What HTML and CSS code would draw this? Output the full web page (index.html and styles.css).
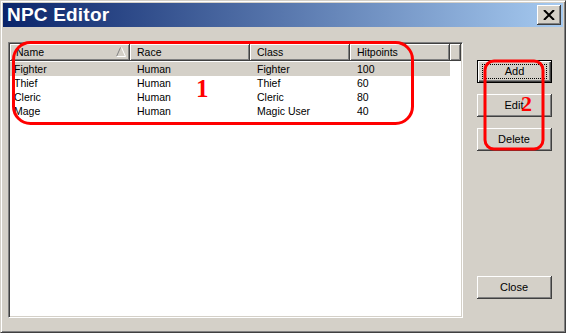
FILE: index.html
```html
<!DOCTYPE html>
<html lang="en">
<head>
    <meta charset="UTF-8">
    <title>NPC Editor</title>
    <link rel="stylesheet" href="styles.css">
</head>
<body>
    <div class="window">
        <div class="titlebar">
            <span class="title">NPC Editor</span>
            <div class="close-box">
                <svg width="12" height="10" viewBox="0 0 12 10">
                    <path d="M1 0 L11 10 M11 0 L1 10" stroke="#000" stroke-width="2" />
                </svg>
            </div>
        </div>

        <div class="body">
            <!-- NPC list -->
            <div class="listview">
                <div class="lv-header">
                    <div class="col-head w120 first">Name
                        <svg class="sort-arrow" width="10" height="10" viewBox="0 0 10 10">
                            <path d="M4.5 0.5 L0.5 9.5" stroke="#808080" fill="none" />
                            <path d="M5.5 0.5 L9.5 9.5 L0.5 9.5" stroke="#fff" fill="none" />
                        </svg>
                    </div>
                    <div class="col-head w120">Race</div>
                    <div class="col-head w100">Class</div>
                    <div class="col-head w100">Hitpoints</div>
                    <div class="col-head filler"></div>
                </div>
                <div class="lv-rows">
                    <div class="lv-row selected">
                        <span class="w120 first">Fighter</span><span class="w120">Human</span><span class="w100">Fighter</span><span class="w100">100</span>
                    </div>
                    <div class="lv-row">
                        <span class="w120 first">Thief</span><span class="w120">Human</span><span class="w100">Thief</span><span class="w100">60</span>
                    </div>
                    <div class="lv-row">
                        <span class="w120 first">Cleric</span><span class="w120">Human</span><span class="w100">Cleric</span><span class="w100">80</span>
                    </div>
                    <div class="lv-row">
                        <span class="w120 first">Mage</span><span class="w120">Human</span><span class="w100">Magic User</span><span class="w100">40</span>
                    </div>
                </div>
            </div>

            <!-- Buttons -->
            <div class="buttons">
                <button class="btn default"><span class="focus">Add</span></button>
                <button class="btn">Edit</button>
                <button class="btn">Delete</button>
                <button class="btn bottom">Close</button>
            </div>
        </div>

        <!-- red markers drawn over the dialog -->
        <svg class="marks" width="566" height="333" viewBox="0 0 566 333">
            <rect x="13.5" y="42.5" width="399" height="81" rx="17" ry="17" fill="none" stroke="#f00" stroke-width="3" />
            <rect x="485" y="61" width="58" height="88" rx="9" ry="9" fill="none" stroke="#f00" stroke-width="3" />
            <text x="196" y="97" class="mark-num big">1</text>
            <text x="521" y="111" class="mark-num">2</text>
        </svg>
    </div>
</body>
</html>
```

FILE: styles.css
```css
/* CSS */
body {
    margin: 0;
    font-family: "Liberation Sans", Arial, sans-serif;
    background-color: #d4d0c8;
}

.window {
    position: relative;
    box-sizing: border-box;
    width: 566px;
    height: 333px;
    padding: 2px;
    background-color: #d4d0c8;
    border: 1px solid;
    border-color: #d4d0c8 #404040 #404040 #d4d0c8;
    box-shadow: inset 1px 1px #fff, inset -1px -1px #808080;
    display: flex;
    flex-direction: column;
}

.titlebar {
    height: 24px;
    display: flex;
    align-items: center;
    justify-content: space-between;
    padding: 0 2px 0 4px;
    background: linear-gradient(to right, #0a246a, #a6caf0);
}

.title {
    color: #fff;
    font-weight: bold;
    font-size: 19px;
    letter-spacing: 0.2px;
}

.close-box {
    box-sizing: border-box;
    width: 24px;
    height: 20px;
    display: flex;
    align-items: center;
    justify-content: center;
    background-color: #d4d0c8;
    border-right: 1px solid #404040;
    border-bottom: 1px solid #404040;
    box-shadow: inset 1px 1px #fff, inset -1px -1px #808080;
}

.body {
    flex: 1;
    display: flex;
    padding: 15px 11px 12px 5px;
    gap: 14px;
}

.listview {
    box-sizing: border-box;
    width: 455px;
    background-color: #fff;
    border: 1px solid;
    border-color: #808080 #fff #fff #808080;
    box-shadow: inset 1px 1px #404040, inset -1px -1px #d4d0c8;
    padding: 1px;
    font-size: 10.5px;
    color: #000;
}

.lv-header {
    display: flex;
    height: 17px;
}

.col-head {
    box-sizing: border-box;
    position: relative;
    height: 17px;
    line-height: 16px;
    padding-left: 7px;
    background-color: #d4d0c8;
    border-right: 1px solid #404040;
    border-bottom: 1px solid #404040;
    box-shadow: inset 1px 1px #fff, inset -1px -1px #808080;
}

.col-head.first {
    padding-left: 6px;
}

.col-head.filler {
    flex: 1;
}

.sort-arrow {
    position: absolute;
    right: 3px;
    top: 3px;
}

.lv-rows {
    padding-top: 1px;
}

.lv-row {
    display: flex;
    width: 440px;
    height: 14px;
    line-height: 14px;
}

.lv-row span {
    box-sizing: border-box;
    padding-left: 7px;
    white-space: nowrap;
}

.lv-row span.first {
    padding-left: 4px;
}

.lv-row.selected {
    background-color: #d4d0c8;
}

.w120 {
    width: 120px;
    flex: none;
}

.w100 {
    width: 100px;
    flex: none;
}

.buttons {
    display: flex;
    flex-direction: column;
    gap: 11px;
    padding-top: 18px;
    padding-bottom: 19px;
}

.btn {
    box-sizing: border-box;
    width: 75px;
    height: 23px;
    padding: 0;
    font-family: "Liberation Sans", Arial, sans-serif;
    font-size: 11px;
    color: #000;
    background-color: #d4d0c8;
    border: none;
    border-right: 1px solid #404040;
    border-bottom: 1px solid #404040;
    box-shadow: inset 1px 1px #fff, inset -1px -1px #808080;
}

.btn.default {
    border: 1px solid #000;
    box-shadow: inset 1px 1px #fff, inset -1px -1px #404040, inset -2px -2px #808080;
    display: flex;
    align-items: center;
    justify-content: center;
}

.btn .focus {
    box-sizing: border-box;
    width: 65px;
    height: 15px;
    line-height: 13px;
    border: 1px dotted #000;
}

.btn.bottom {
    margin-top: auto;
}

.marks {
    position: absolute;
    left: -1px;
    top: -1px;
    pointer-events: none;
}

.mark-num {
    font-family: "Liberation Serif", "Times New Roman", serif;
    font-weight: bold;
    font-size: 22px;
    fill: #f00;
}

.mark-num.big {
    font-size: 25px;
}
```
